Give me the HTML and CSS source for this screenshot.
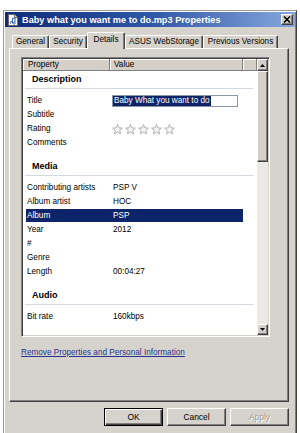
FILE: index.html
```html
<!DOCTYPE html>
<html>
<head>
<meta charset="utf-8">
<link rel="stylesheet" href="styles.css">
</head>
<body>
<div class="dialog">
  <div class="titlebar">
    <svg class="ticon" width="10" height="12" viewBox="0 0 10 12">
      <path d="M0.5 0.5 H6.5 L9.5 3.5 V11.5 H0.5 Z" fill="#fff" stroke="#6a6a6a"/>
      <path d="M6.5 0.5 V3.5 H9.5" fill="#ddd" stroke="#6a6a6a"/>
      <path d="M3 9.5 a1.2 1 0 1 1 1.4 -0.6 V4.5 L7 4 V8.5 a1.2 1 0 1 1 -0.6 -0.4" fill="none" stroke="#1d4fb0" stroke-width="0.9"/>
    </svg>
    <span class="ttext">Baby what you want me to do.mp3 Properties</span>
    <span class="close"><svg width="8" height="7" viewBox="0 0 8 7"><path d="M1 0.5 L7 6.5 M7 0.5 L1 6.5" stroke="#000" stroke-width="1.6"/></svg></span>
  </div>
  <div class="tabs">
    <div class="tab w-gen">General</div>
    <div class="tab w-sec">Security</div>
    <div class="tab w-det sel">Details</div>
    <div class="tab w-asus">ASUS WebStorage</div>
    <div class="tab w-prev">Previous Versions</div>
  </div>
  <div class="panel">
    <div class="list">
      <div class="list-main">
        <div class="lhead">
          <div class="hcell c1">Property</div>
          <div class="hcell c2">Value</div>
          <div class="hcell c3"></div>
        </div>
        <div class="lbody">
          <div class="grp first">Description</div>
          <div class="row"><span class="k">Title</span><span class="v"><span class="edit"><span class="seltext">Baby What you want to do</span></span></span></div>
          <div class="row"><span class="k">Subtitle</span><span class="v"></span></div>
          <div class="row"><span class="k">Rating</span><span class="v">
            <svg class="stars" width="63" height="11" viewBox="0 0 63 11">
              <g fill="#f6f6f6" stroke="#a9a9a9" stroke-width="0.9">
                <polygon points="5.5,0.6 6.9,3.9 10.4,4.1 7.7,6.4 8.6,9.9 5.5,8 2.4,9.9 3.3,6.4 0.6,4.1 4.1,3.9"/>
                <polygon transform="translate(13 0)" points="5.5,0.6 6.9,3.9 10.4,4.1 7.7,6.4 8.6,9.9 5.5,8 2.4,9.9 3.3,6.4 0.6,4.1 4.1,3.9"/>
                <polygon transform="translate(26 0)" points="5.5,0.6 6.9,3.9 10.4,4.1 7.7,6.4 8.6,9.9 5.5,8 2.4,9.9 3.3,6.4 0.6,4.1 4.1,3.9"/>
                <polygon transform="translate(39 0)" points="5.5,0.6 6.9,3.9 10.4,4.1 7.7,6.4 8.6,9.9 5.5,8 2.4,9.9 3.3,6.4 0.6,4.1 4.1,3.9"/>
                <polygon transform="translate(52 0)" points="5.5,0.6 6.9,3.9 10.4,4.1 7.7,6.4 8.6,9.9 5.5,8 2.4,9.9 3.3,6.4 0.6,4.1 4.1,3.9"/>
              </g>
            </svg></span></div>
          <div class="row"><span class="k">Comments</span><span class="v"></span></div>
          <div class="grp">Media</div>
          <div class="row"><span class="k">Contributing artists</span><span class="v">PSP V</span></div>
          <div class="row"><span class="k">Album artist</span><span class="v">HOC</span></div>
          <div class="row sel"><span class="k">Album</span><span class="v">PSP</span></div>
          <div class="row"><span class="k">Year</span><span class="v">2012</span></div>
          <div class="row"><span class="k">#</span><span class="v"></span></div>
          <div class="row"><span class="k">Genre</span><span class="v"></span></div>
          <div class="row"><span class="k">Length</span><span class="v">00:04:27</span></div>
          <div class="grp">Audio</div>
          <div class="row"><span class="k">Bit rate</span><span class="v">160kbps</span></div>
        </div>
      </div>
      <div class="scroll">
        <div class="sbtn up"><svg width="5" height="3" viewBox="0 0 5 3"><path d="M0 3 L2.5 0 L5 3 Z" fill="#000"/></svg></div>
        <div class="track"><div class="thumb"></div></div>
        <div class="sbtn down"><svg width="5" height="3" viewBox="0 0 5 3"><path d="M0 0 L2.5 3 L5 0 Z" fill="#000"/></svg></div>
      </div>
    </div>
    <a class="link">Remove Properties and Personal Information</a>
  </div>
  <div class="buttons">
    <div class="btn default">OK</div>
    <div class="btn">Cancel</div>
    <div class="btn disabled">Apply</div>
  </div>
</div>
</body>
</html>
```
FILE: styles.css
```css
* { box-sizing: border-box; }
html, body { margin: 0; padding: 0; }
body {
  width: 300px;
  height: 433px;
  overflow: hidden;
  background: #fff;
  font-family: "Liberation Sans", Arial, sans-serif;
  font-size: 8.2px;
  color: #000;
}
.dialog {
  margin: 10px 0 0 3px;
  width: 294px;
  height: 430px;
  background: #d6d3cc;
  border: 1px solid;
  border-color: #9a9a9a #404040 #404040 #9a9a9a;
  padding: 1px;
  box-shadow: inset 1px 1px #fff, inset -1px -1px #808080;
}
.titlebar {
  height: 15px;
  display: flex;
  align-items: center;
  padding-left: 3px;
  background: linear-gradient(90deg, #0d2b78 0%, #2f56a8 50%, #86a7dd 100%);
}
.ticon { margin-right: 4px; flex: none; }
.ttext {
  flex: 1;
  color: #fff;
  font-weight: bold;
  font-size: 9.2px;
  white-space: nowrap;
}
.close {
  width: 12px;
  height: 11px;
  margin-right: 2px;
  background: #d4d0c8;
  border: 1px solid;
  border-color: #fff #404040 #404040 #fff;
  box-shadow: inset -1px -1px #808080;
  display: flex;
  align-items: center;
  justify-content: center;
}
.tabs {
  margin-top: 5px;
  height: 16px;
  display: flex;
  align-items: flex-end;
  padding-left: 7px;
  position: relative;
  z-index: 1;
}
.tab {
  height: 13px;
  line-height: 12px;
  text-align: center;
  white-space: nowrap;
  background: #d6d3cc;
  border-top: 1px solid #fff;
  border-left: 1px solid #fff;
  border-right: 1px solid #404040;
  border-radius: 2px 2px 0 0;
  box-shadow: inset -1px 0 #808080;
}
.tab.sel {
  height: 17px;
  line-height: 14px;
  margin-bottom: -1px;
}
.w-gen { width: 37px; }
.w-sec { width: 38px; }
.w-det { width: 38px; }
.w-asus { width: 78px; }
.w-prev { width: 75px; }
.panel {
  margin-left: 4px;
  width: 280px;
  height: 354px;
  border: 1px solid;
  border-color: #fff #404040 #404040 #fff;
  box-shadow: inset -1px -1px #808080;
  padding: 8px 0 0 11px;
}
.list {
  width: 249px;
  height: 280px;
  border: 1px solid;
  border-color: #808080 #fff #fff #808080;
  box-shadow: inset 1px 1px #404040, inset -1px -1px #d4d0c8;
  padding: 1px;
  display: flex;
  background: #fff;
}
.list-main {
  width: 234px;
  overflow: hidden;
}
.lhead { display: flex; height: 12px; }
.hcell {
  height: 12px;
  line-height: 11px;
  background: #d4d0c8;
  border-right: 1px solid #808080;
  border-bottom: 1px solid #808080;
  box-shadow: inset 1px 1px #fff;
  padding-left: 5px;
  white-space: nowrap;
}
.c1 { width: 87px; }
.c2 { width: 133px; padding-left: 4px; }
.c3 { width: 14px; }
.grp {
  margin: 8px 4px 5px 2px;
  height: 18px;
  line-height: 17px;
  border-bottom: 1px solid #d3d9e3;
  padding-left: 7px;
  font-weight: bold;
  font-size: 9px;
}
.grp.first { margin-top: 0; }
.row {
  display: flex;
  height: 14px;
  line-height: 14px;
  white-space: nowrap;
}
.k { width: 87px; padding-left: 4px; flex: none; }
.v { padding-left: 3px; display: flex; align-items: center; }
.row.sel {
  background: #0d2468;
  color: #fff;
  margin-left: 3px;
  width: 217px;
  height: 13px;
  line-height: 13px;
  margin-bottom: 1px;
}
.row.sel .k { width: 84px; padding-left: 1px; }
.edit {
  margin-left: -1px;
  width: 126px;
  height: 12px;
  border: 1px solid #8b95a6;
  background: #fff;
  display: flex;
  align-items: center;
}
.seltext {
  background: #0d2468;
  color: #fff;
  line-height: 10px;
  padding: 0 1px 0 1px;
}
.stars { margin-left: -1px; display: block; }
.scroll {
  width: 11px;
  display: flex;
  flex-direction: column;
}
.sbtn {
  height: 12px;
  background: #d4d0c8;
  border: 1px solid;
  border-color: #fff #404040 #404040 #fff;
  box-shadow: inset -1px -1px #808080;
  display: flex;
  align-items: center;
  justify-content: center;
}
.sbtn.down { height: 11px; }
.track {
  flex: 1;
  background: #ebe9e5;
}
.thumb {
  height: 91px;
  background: #d4d0c8;
  border: 1px solid;
  border-color: #fff #404040 #404040 #fff;
  box-shadow: inset -1px -1px #808080;
}
.link {
  display: block;
  margin-top: 11px;
  line-height: 10px;
  color: #26338e;
  text-decoration: underline;
  white-space: nowrap;
}
.buttons {
  margin-top: 6px;
  display: flex;
  justify-content: flex-end;
  gap: 4px;
  padding-right: 6px;
}
.btn {
  width: 59px;
  height: 18px;
  line-height: 16px;
  text-align: center;
  font-size: 8.4px;
  background: #d6d3cc;
  border: 1px solid;
  border-color: #fff #404040 #404040 #fff;
  box-shadow: inset -1px -1px #808080;
}
.btn.default {
  border: 1px solid #000;
  box-shadow: inset 1px 1px #fff, inset -1px -1px #404040, inset -2px -2px #808080;
}
.btn.disabled {
  color: #9c9a95;
  text-shadow: 1px 1px #fff;
}
```
